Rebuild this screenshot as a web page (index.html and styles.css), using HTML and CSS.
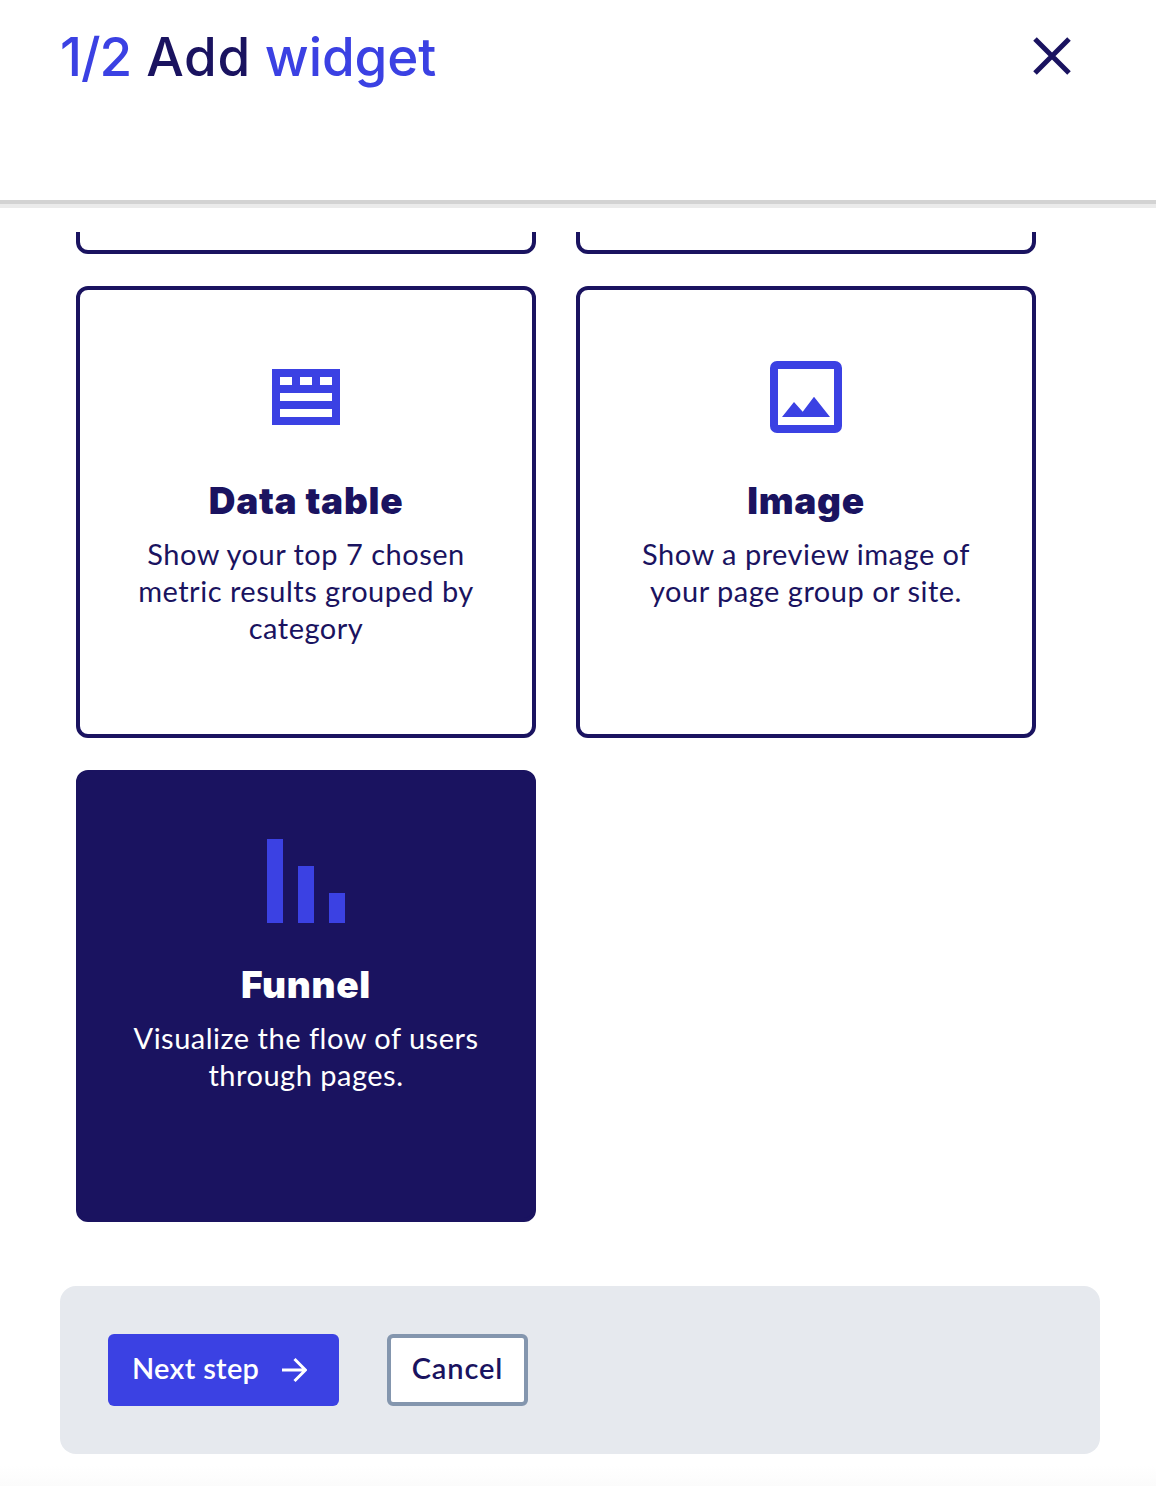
FILE: index.html
```html
<!DOCTYPE html>
<html lang="en">
<head>
<meta charset="utf-8">
<title>Add widget</title>
<link rel="stylesheet" href="styles.css">
</head>
<body>
<div class="modal">
  <header class="head">
    <h1 class="title"><span class="step">1/2</span> <span class="add">Add</span> widget</h1>
    <svg class="close" viewBox="0 0 38 38" aria-hidden="true"><path d="M2 2 L36 36 M36 2 L2 36"/></svg>
  </header>
  <div class="scroller">
    <div class="grid">
      <div class="card"></div>
      <div class="card"></div>
      <div class="card">
        <svg class="icon-table" viewBox="0 0 68 56" aria-hidden="true"><path fill-rule="evenodd" d="M0 0H68V56H0Z M8 8V16H20V8Z M28 8V16H40V8Z M48 8V16H60V8Z M8 24V32H60V24Z M8 40V48H60V40Z"/></svg>
        <h2 class="name">Data table</h2>
        <p class="desc">Show your top 7 chosen metric results grouped by category</p>
      </div>
      <div class="card">
        <svg class="icon-image" viewBox="0 0 72 72" aria-hidden="true"><rect class="frame" x="4" y="4" width="64" height="64" rx="3"/><path d="M12 56 L24 41 L32.7 50.7 L44 35.7 L60 56Z"/></svg>
        <h2 class="name">Image</h2>
        <p class="desc">Show a preview image of your page group or site.</p>
      </div>
      <div class="card selected">
        <svg class="icon-funnel" viewBox="0 0 78 84" aria-hidden="true"><rect x="0" y="0" width="16" height="84"/><rect x="31" y="27" width="16" height="57"/><rect x="62" y="54" width="16" height="30"/></svg>
        <h2 class="name">Funnel</h2>
        <p class="desc">Visualize the flow of users through pages.</p>
      </div>
    </div>
  </div>
  <footer class="actions">
    <button class="btn primary" type="button"><span class="label">Next step</span>
      <svg class="arrow" viewBox="0 0 26 26" aria-hidden="true"><path d="M1 13 H24 M13.5 2 L24.5 13 L13.5 24"/></svg>
    </button>
    <button class="btn secondary" type="button"><span class="label">Cancel</span></button>
  </footer>
  <div class="fade"></div>
</div>
</body>
</html>
```
FILE: styles.css
```css
* { box-sizing: border-box; }
html, body { margin: 0; padding: 0; background: #fff; }
body { font-family: "Lato", "Open Sans", sans-serif; color: #1a1360; }
.modal { width: 1156px; height: 1486px; display: flex; flex-direction: column; overflow: hidden; }
.head {
  height: 208px; flex: none; padding: 25px 85px 0 60px;
  display: flex; justify-content: space-between; align-items: flex-start;
  border-bottom: 4px solid #ebebeb; position: relative;
}
.head::after { content: ""; position: absolute; left: 0; right: 0; bottom: 0; height: 4px; background: #d3d3d3; }
.title { margin: 0; font-family: "Inter", "Lato", sans-serif; font-size: 53px; line-height: 64px; font-weight: 500; letter-spacing: -0.1px; color: #3b41e3; white-space: nowrap; }
.step { letter-spacing: -1px; margin-right: 1px; }
.add { color: #1a1360; letter-spacing: 0.6px; }
.close { width: 38px; height: 38px; margin-top: 12px; fill: none; stroke: #1a1360; stroke-width: 5; }
.scroller { height: 1054px; flex: none; margin-top: 24px; padding: 0 76px; overflow: hidden; }
.grid { margin-top: -430px; display: grid; grid-template-columns: 460px 460px; grid-auto-rows: 452px; gap: 32px 40px; }
.card {
  border: 4px solid #1a1360; border-radius: 12px; background: #fff;
  padding: 71px 40px 0; display: flex; flex-direction: column; align-items: center; text-align: center;
}
.card svg { fill: #3b41e3; flex: none; display: block; }
.icon-table { width: 68px; height: 56px; margin-top: 8px; }
.icon-image { width: 72px; height: 72px; }
.icon-image .frame { fill: none; stroke: #3b41e3; stroke-width: 8; }
.icon-funnel { width: 78px; height: 84px; margin-bottom: -12px; }
.name { margin: 46px 0 0; font-family: "Inter", "Lato", sans-serif; font-size: 37px; line-height: 44px; font-weight: 900; letter-spacing: 0.7px; }
.icon-table + .name { margin-top: 54px; }
.desc { margin: 12px 0 0; font-size: 29px; line-height: 37px; font-weight: 400; letter-spacing: 0.5px; }
.selected { background: #1a1360; color: #fff; padding-top: 65px; }
.selected .name { margin-top: 52px; }
.actions {
  flex: none; margin: 0 56px 0 60px; height: 168px; padding: 48px;
  background: #e6e9ee; border-radius: 16px; display: flex; gap: 48px;
}
.btn { height: 72px; border-radius: 6px; font-family: inherit; font-size: 29px; font-weight: 600; letter-spacing: 0.3px; display: flex; align-items: center; padding: 0; }
.label { position: relative; top: -3px; }
.primary { width: 231px; background: #3b41e3; color: #fff; border: 0; padding-left: 24px; gap: 22px; }
.arrow { width: 26px; height: 26px; fill: none; stroke: #fff; stroke-width: 3; }
.secondary { width: 141px; justify-content: center; background: #fff; color: #1a1360; border: 4px solid #8496ae; letter-spacing: 0.9px; }
.fade { flex: none; height: 20px; margin-top: 12px; background: linear-gradient(#fff, #fbfbfb); }
```
